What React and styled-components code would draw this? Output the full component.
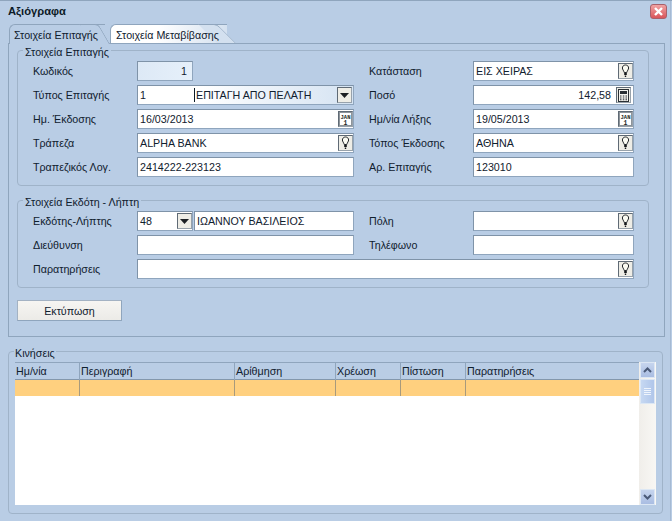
import React from "react";
import styled, { createGlobalStyle } from "styled-components";

const GlobalStyle = createGlobalStyle`
  html, body {
    margin: 0;
    padding: 0;
    background: #b9cde5;
  }
  * {
    box-sizing: border-box;
  }
`;

const Window = styled.div`
  width: 672px;
  height: 521px;
  overflow: hidden;
  background: #b9cde5;
  border-top: 1px solid #8fa5bd;
  box-shadow: inset -1px 0 0 #b9cde5, inset -2px 0 0 #a6bad3;
  font-family: "Liberation Sans", Arial, sans-serif;
  font-size: 10.7px;
  color: #10202e;
`;

const TitleBar = styled.div`
  height: 23px;
  padding: 3px 5px 0 8px;
  display: flex;
  align-items: flex-start;
  justify-content: space-between;
`;

const Title = styled.div`
  font-weight: bold;
  font-size: 11.2px;
  line-height: 15px;
  color: #0c1a26;
`;

const CloseButton = styled.div`
  width: 17px;
  height: 15px;
  border: 1px solid #a8606a;
  border-radius: 3px;
  background: linear-gradient(#f0a3a3, #d9555a);
  display: flex;
  align-items: center;
  justify-content: center;
`;

const TabBar = styled.div`
  height: 19px;
  margin-left: 9px;
  display: flex;
  gap: 5px;
  align-items: flex-end;
`;

const Tab = styled.div`
  position: relative;
  height: ${(p) => (p.$active ? "20px" : "19px")};
  margin-bottom: ${(p) => (p.$active ? "-1px" : "0")};
  width: ${(p) => p.$width}px;
  padding: 4px 0 0 ${(p) => (p.$active ? "4px" : "5px")};
  border: 1px solid #8fa5bd;
  border-right: 0;
  border-bottom: 0;
  border-radius: 6px 0 0 0;
  background: ${(p) =>
    p.$active ? "#b9cde5" : "linear-gradient(100deg, #ffffff 40%, #d3e0ef)"};
  line-height: 13px;
  white-space: nowrap;
  z-index: ${(p) => (p.$active ? 2 : 1)};

  &::after {
    content: "";
    position: absolute;
    top: -1px;
    right: ${(p) => (p.$active ? "-5px" : "-9px")};
    width: 18px;
    height: 100%;
    background: ${(p) => (p.$active ? "#b9cde5" : "#d3e0ef")};
    border-right: 1px solid #8fa5bd;
    border-top: 1px solid #8fa5bd;
    border-radius: 0 4px 0 0;
    transform: skewX(${(p) => (p.$active ? "30deg" : "45deg")});
    transform-origin: bottom;
    z-index: -1;
  }
`;

const Panel = styled.div`
  position: relative;
  z-index: 1;
  height: 294px;
  margin: 0 7px 0 8px;
  padding: 6px 15px 0 8px;
  border: 1px solid #8fa5bd;
`;

const Group = styled.div`
  position: relative;
  margin-top: ${(p) => p.$top || 0}px;
  padding: 10px 14px 8px 15px;
  border: 1px solid #9fb3c9;
  border-radius: 4px;
`;

const Legend = styled.span`
  position: absolute;
  top: -5px;
  left: 5px;
  padding: 0 2px;
  background: #b9cde5;
  line-height: 13px;
  white-space: nowrap;
`;

const FormGrid = styled.div`
  display: grid;
  grid-template-columns: 104px 217px 119px 161px;
  grid-auto-rows: 20px;
  row-gap: 4px;
  align-items: center;
`;

const Label = styled.label`
  padding-left: ${(p) => (p.$side ? "15px" : "0")};
  padding-top: 1px;
  line-height: 19px;
`;

const Field = styled.div`
  height: 20px;
  width: ${(p) => (p.$width ? `${p.$width}px` : "100%")};
  grid-column: ${(p) => (p.$wide ? "2 / 5" : "auto")};
  padding: 0 ${(p) => (p.$right ? "2px" : "0")} 0 2px;
  display: flex;
  align-items: center;
  gap: 2px;
  justify-content: ${(p) => (p.$right ? "flex-end" : "space-between")};
  border: 1px solid #8fa5bd;
  border-top-color: #7f93a8;
  border-left-color: #7f93a8;
  background: ${(p) =>
    p.$tint ? "linear-gradient(90deg, #dde9f6, #e6f0fa)" : "#ffffff"};
  line-height: 18px;
`;

const FieldText = styled.span`
  white-space: nowrap;
  flex: ${(p) => (p.$grow ? "1" : "none")};
  text-align: ${(p) => (p.$right ? "right" : "left")};
  padding-right: ${(p) => (p.$right ? "3px" : "0")};
`;

const ComboRow = styled.div`
  display: flex;
  height: 20px;
  gap: 1px;
`;

const ComboCell = styled.div`
  height: 20px;
  width: ${(p) => (p.$width ? `${p.$width}px` : "auto")};
  flex: ${(p) => (p.$width ? "none" : "1")};
  padding: 0 0 0 2px;
  display: flex;
  align-items: center;
  justify-content: space-between;
  border: 1px solid #8fa5bd;
  border-top-color: #7f93a8;
  border-left-color: #7f93a8;
  background: #ffffff;
  line-height: 18px;
`;

const TypeCombo = styled.div`
  height: 20px;
  padding-right: 1px;
  display: flex;
  align-items: center;
  border: 1px solid #8fa5bd;
  border-top-color: #7f93a8;
  border-left-color: #7f93a8;
  background: linear-gradient(90deg, #ffffff 30%, #f1f6fb 50%, #d5e3f2);
`;

const TypeCode = styled.span`
  width: 56px;
  padding-left: 2px;
`;

const TypeName = styled.span`
  flex: 1;
  padding-left: 1px;
  border-left: 1px solid #0c1a26;
  line-height: 14px;
  white-space: nowrap;
`;

const IconBox = styled.span`
  flex: none;
  width: 15px;
  height: 16px;
  display: flex;
  align-items: center;
  justify-content: center;
  background: #eeede6;
  border: 1px solid #5f6a75;
  border-right-color: #98a2ab;
  border-bottom-color: #98a2ab;
`;

const PrintButton = styled.button`
  display: block;
  width: 105px;
  height: 21px;
  margin: 12px 0 0 0;
  padding: 0;
  border: 1px solid #a3b2c3;
  border-right-color: #8fa5bd;
  border-bottom-color: #8fa5bd;
  background: linear-gradient(#f6f5f2, #ecebe7);
  font: inherit;
  color: inherit;
`;

const MovesSection = styled.div`
  position: relative;
  height: 163px;
  margin: 14px 9px 0 8px;
  padding: 10px 0 0 6px;
  border: 1px solid #9fb3c9;
  border-radius: 4px;
`;

const MovesLegend = styled(Legend)`
  left: 5px;
  padding: 0 1px;
`;

const TableArea = styled.div`
  display: flex;
  height: 143px;
  width: 641px;
`;

const Table = styled.div`
  flex: 1;
  display: flex;
  flex-direction: column;
  background: #ffffff;
`;

const HeaderRow = styled.div`
  display: grid;
  grid-template-columns: 65px 155px 101px 65px 65px 1fr;
  height: 18px;
  background: #b9cde5;
  border-top: 1px solid #8fa5bd;
  border-bottom: 1px solid #8397ac;
`;

const HeaderCell = styled.div`
  padding-left: 1px;
  line-height: 17px;
  white-space: nowrap;
  border-right: ${(p) => (p.$last ? "0" : "1px solid #8fa5bd")};
`;

const SelectedRow = styled.div`
  display: grid;
  grid-template-columns: 65px 155px 101px 65px 65px 1fr;
  height: 16px;
  background: #ffd07f;
`;

const SelectedCell = styled.div`
  border-right: ${(p) => (p.$last ? "0" : "1px solid #a89a7c")};
`;

const ScrollBar = styled.div`
  width: 17px;
  padding-left: 1px;
  display: flex;
  flex-direction: column;
  background: linear-gradient(90deg, #f0eeea, #f8f7f4);
`;

const ScrollButton = styled.div`
  width: 15px;
  height: 16px;
  margin-bottom: ${(p) => p.$mb || 0}px;
  display: flex;
  align-items: center;
  justify-content: center;
  border: 1px solid #dce7f4;
  background: linear-gradient(#c6d5ee, #a9bde2);
`;

const ScrollThumb = styled.div`
  width: 15px;
  height: 25px;
  display: flex;
  flex-direction: column;
  align-items: center;
  justify-content: center;
  gap: 1px;
  border: 1px solid #dce7f4;
  background: linear-gradient(90deg, #c6d8f2, #b0c6ea);
`;

const ThumbLine = styled.i`
  display: block;
  width: 7px;
  height: 1px;
  background: #eef4fc;
`;

const ScrollTrack = styled.div`
  flex: 1;
`;

function Bulb() {
  return (
    <svg width="9" height="14" viewBox="0 0 9 14">
      <path
        d="M4.5 1C2.6 1 1.4 2.3 1.4 4c0 1.500 1.300 2.500 1.800 4.500h2.600C6.300 6.500 7.600 5.500 7.600 4 7.600 2.300 6.400 1 4.500 1z"
        fill="#fbfbf2"
        stroke="#24282c"
      />
      <path d="M3.200 9h2.600v2H3.200zM3.800 11.500h1.400V13H3.800z" fill="#15181b" />
    </svg>
  );
}

function Calendar() {
  return (
    <svg width="13" height="14" viewBox="0 0 13 14">
      <rect x="0.5" y="0.5" width="12" height="13" fill="#fff" stroke="#8d949a" />
      <text x="6.5" y="6.500" fontSize="5.500" fontWeight="bold" fontFamily="Liberation Mono, monospace" textAnchor="middle" fill="#1b1f22">
        JAN
      </text>
      <text x="6.5" y="12.500" fontSize="6.500" fontWeight="bold" fontFamily="Liberation Mono, monospace" textAnchor="middle" fill="#1b1f22">
        1
      </text>
    </svg>
  );
}

function Calculator() {
  return (
    <svg width="11" height="13" viewBox="0 0 11 13">
      <rect x="0.5" y="0.5" width="10" height="12" fill="#f4f3ee" stroke="#2a2f33" />
      <rect x="2" y="2" width="7" height="3" fill="#2a2f33" />
      <path
        d="M2 6.500h1.500v1H2zM4.800 6.500h1.500v1H4.800zM7.500 6.500H9v1H7.500zM2 8.500h1.500v1H2zM4.800 8.500h1.500v1H4.800zM7.500 8.500H9v1H7.500zM2 10.300h1.500v1H2zM4.800 10.300h1.500v1H4.800zM7.500 10.300H9v1H7.500z"
        fill="#2a2f33"
      />
    </svg>
  );
}

function Arrow() {
  return (
    <svg width="9" height="5" viewBox="0 0 9 5">
      <path d="M0 0h9L4.500 5z" fill="#1c2024" />
    </svg>
  );
}

function Chevron({ up }) {
  return (
    <svg width="9" height="6" viewBox="0 0 9 6">
      <path
        d={up ? "M1 5l3.500-3.500L8 5" : "M1 1l3.500 3.500L8 1"}
        fill="none"
        stroke="#4a5a78"
        strokeWidth="2"
      />
    </svg>
  );
}

function CloseIcon() {
  return (
    <svg width="11" height="9" viewBox="0 0 11 9">
      <path d="M2 1l7 7M9 1L2 8" stroke="#ffffff" strokeWidth="2.400" />
    </svg>
  );
}

const columns = ["Ημ/νία", "Περιγραφή", "Αρίθμηση", "Χρέωση", "Πίστωση", "Παρατηρήσεις"];

function App() {
  return (
    <Window>
      <GlobalStyle />
      <TitleBar>
        <Title>Αξιόγραφα</Title>
        <CloseButton>
          <CloseIcon />
        </CloseButton>
      </TitleBar>

      <TabBar>
        <Tab $active $width={96}>Στοιχεία Επιταγής</Tab>
        <Tab $width={117}>Στοιχεία Μεταβίβασης</Tab>
      </TabBar>

      <Panel>
        <Group>
          <Legend>Στοιχεία Επιταγής</Legend>
          <FormGrid>
            <Label>Κωδικός</Label>
            <Field $width={56} $tint $right>
              <FieldText $right>1</FieldText>
            </Field>
            <Label $side>Κατάσταση</Label>
            <Field>
              <FieldText>ΕΙΣ ΧΕΙΡΑΣ</FieldText>
              <IconBox><Bulb /></IconBox>
            </Field>

            <Label>Τύπος Επιταγής</Label>
            <TypeCombo>
              <TypeCode>1</TypeCode>
              <TypeName>ΕΠΙΤΑΓΗ ΑΠΟ ΠΕΛΑΤΗ</TypeName>
              <IconBox><Arrow /></IconBox>
            </TypeCombo>
            <Label $side>Ποσό</Label>
            <Field $right>
              <FieldText $grow $right>142,58</FieldText>
              <IconBox><Calculator /></IconBox>
            </Field>

            <Label>Ημ. Έκδοσης</Label>
            <Field>
              <FieldText>16/03/2013</FieldText>
              <IconBox><Calendar /></IconBox>
            </Field>
            <Label $side>Ημ/νία Λήξης</Label>
            <Field>
              <FieldText>19/05/2013</FieldText>
              <IconBox><Calendar /></IconBox>
            </Field>

            <Label>Τράπεζα</Label>
            <Field>
              <FieldText>ALPHA BANK</FieldText>
              <IconBox><Bulb /></IconBox>
            </Field>
            <Label $side>Τόπος Έκδοσης</Label>
            <Field>
              <FieldText>ΑΘΗΝΑ</FieldText>
              <IconBox><Bulb /></IconBox>
            </Field>

            <Label>Τραπεζικός Λογ.</Label>
            <Field>
              <FieldText>2414222-223123</FieldText>
            </Field>
            <Label $side>Αρ. Επιταγής</Label>
            <Field>
              <FieldText>123010</FieldText>
            </Field>
          </FormGrid>
        </Group>

        <Group $top={14}>
          <Legend>Στοιχεία Εκδότη - Λήπτη</Legend>
          <FormGrid>
            <Label>Εκδότης-Λήπτης</Label>
            <ComboRow>
              <ComboCell $width={56}>
                <span>48</span>
                <IconBox><Arrow /></IconBox>
              </ComboCell>
              <ComboCell>ΙΩΑΝΝΟΥ ΒΑΣΙΛΕΙΟΣ</ComboCell>
            </ComboRow>
            <Label $side>Πόλη</Label>
            <Field>
              <span />
              <IconBox><Bulb /></IconBox>
            </Field>

            <Label>Διεύθυνση</Label>
            <Field />
            <Label $side>Τηλέφωνο</Label>
            <Field />

            <Label>Παρατηρήσεις</Label>
            <Field $wide>
              <span />
              <IconBox><Bulb /></IconBox>
            </Field>
          </FormGrid>
        </Group>

        <PrintButton>Εκτύπωση</PrintButton>
      </Panel>

      <MovesSection>
        <MovesLegend>Κινήσεις</MovesLegend>
        <TableArea>
          <Table>
            <HeaderRow>
              {columns.map((name, index) => (
                <HeaderCell key={name} $last={index === columns.length - 1}>
                  {name}
                </HeaderCell>
              ))}
            </HeaderRow>
            <SelectedRow>
              {columns.map((name, index) => (
                <SelectedCell key={name} $last={index === columns.length - 1} />
              ))}
            </SelectedRow>
          </Table>
          <ScrollBar>
            <ScrollButton $mb={1}><Chevron up /></ScrollButton>
            <ScrollThumb>
              <ThumbLine />
              <ThumbLine />
              <ThumbLine />
              <ThumbLine />
            </ScrollThumb>
            <ScrollTrack />
            <ScrollButton><Chevron /></ScrollButton>
          </ScrollBar>
        </TableArea>
      </MovesSection>
    </Window>
  );
}

export default App;
